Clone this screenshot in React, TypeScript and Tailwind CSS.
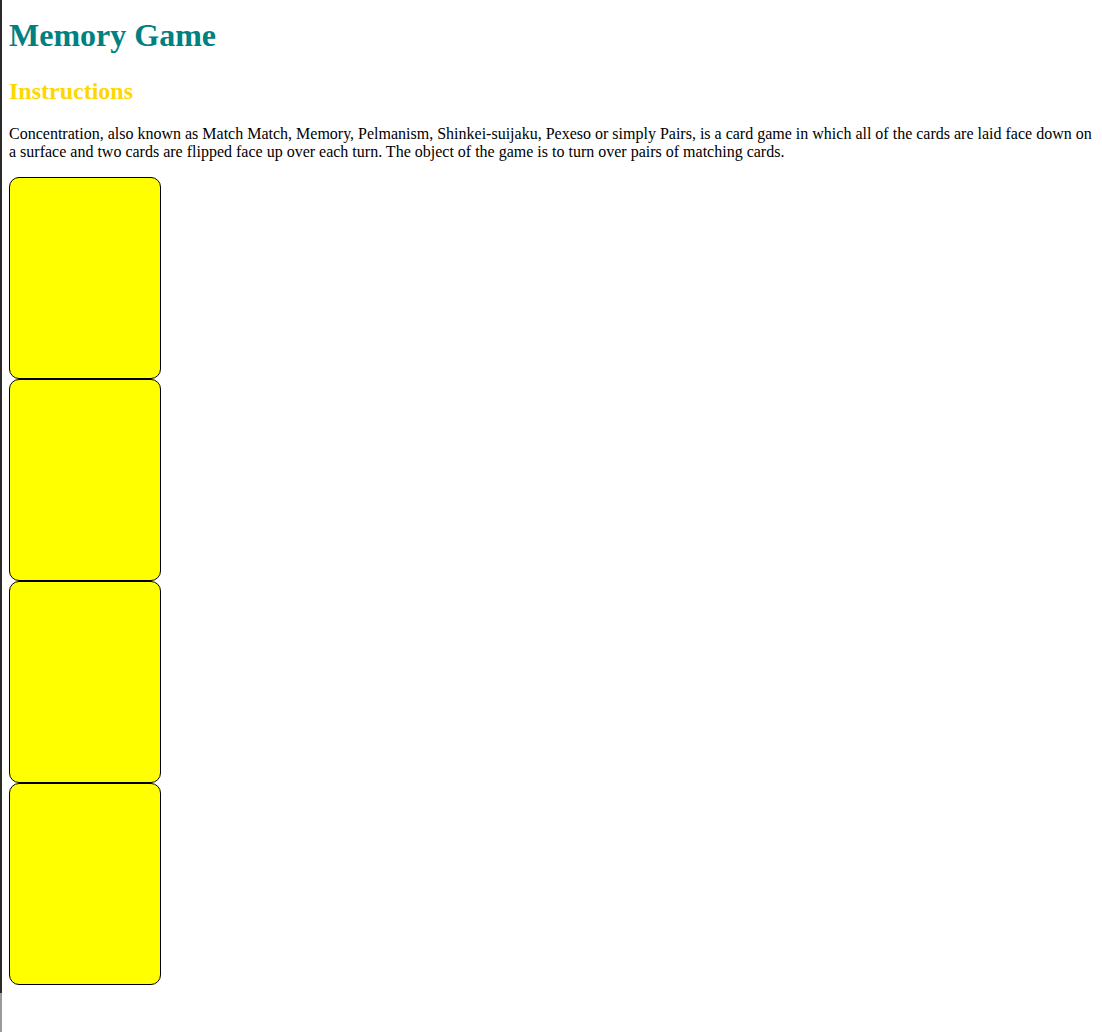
const cards = [1, 2, 3, 4];

const App = () => {
  return (
    <div className="flex flex-col h-[1032px] bg-white font-['Liberation_Serif','Times_New_Roman',serif] text-black">
      <div className="h-[993px] border-l-2 border-[#2a2a2a] pl-[7px] pt-[17px]">
        <h1 className="text-[32px] leading-[37px] font-bold text-[#008080]">Memory Game</h1>
        <h2 className="mt-[23px] text-[24px] leading-[28px] font-bold text-[#ffd700]">Instructions</h2>
        <p className="mt-[20px] text-[16px] leading-[18px] pr-2">
          Concentration, also known as Match Match, Memory, Pelmanism, Shinkei-suijaku, Pexeso or simply Pairs, is a card
          game in which all of the cards are laid face down on a surface and two cards are flipped face up over each turn.
          The object of the game is to turn over pairs of matching cards.
        </p>
        <div className="mt-[16px] flex flex-col">
          {cards.map((c) => (
            <div key={c} className="w-[152px] h-[202px] border border-black rounded-[10px] bg-[#ffff00]" />
          ))}
        </div>
      </div>
      <div className="flex-1 border-l-2 border-[#9a9a9a]" />
    </div>
  );
};

export default App;
